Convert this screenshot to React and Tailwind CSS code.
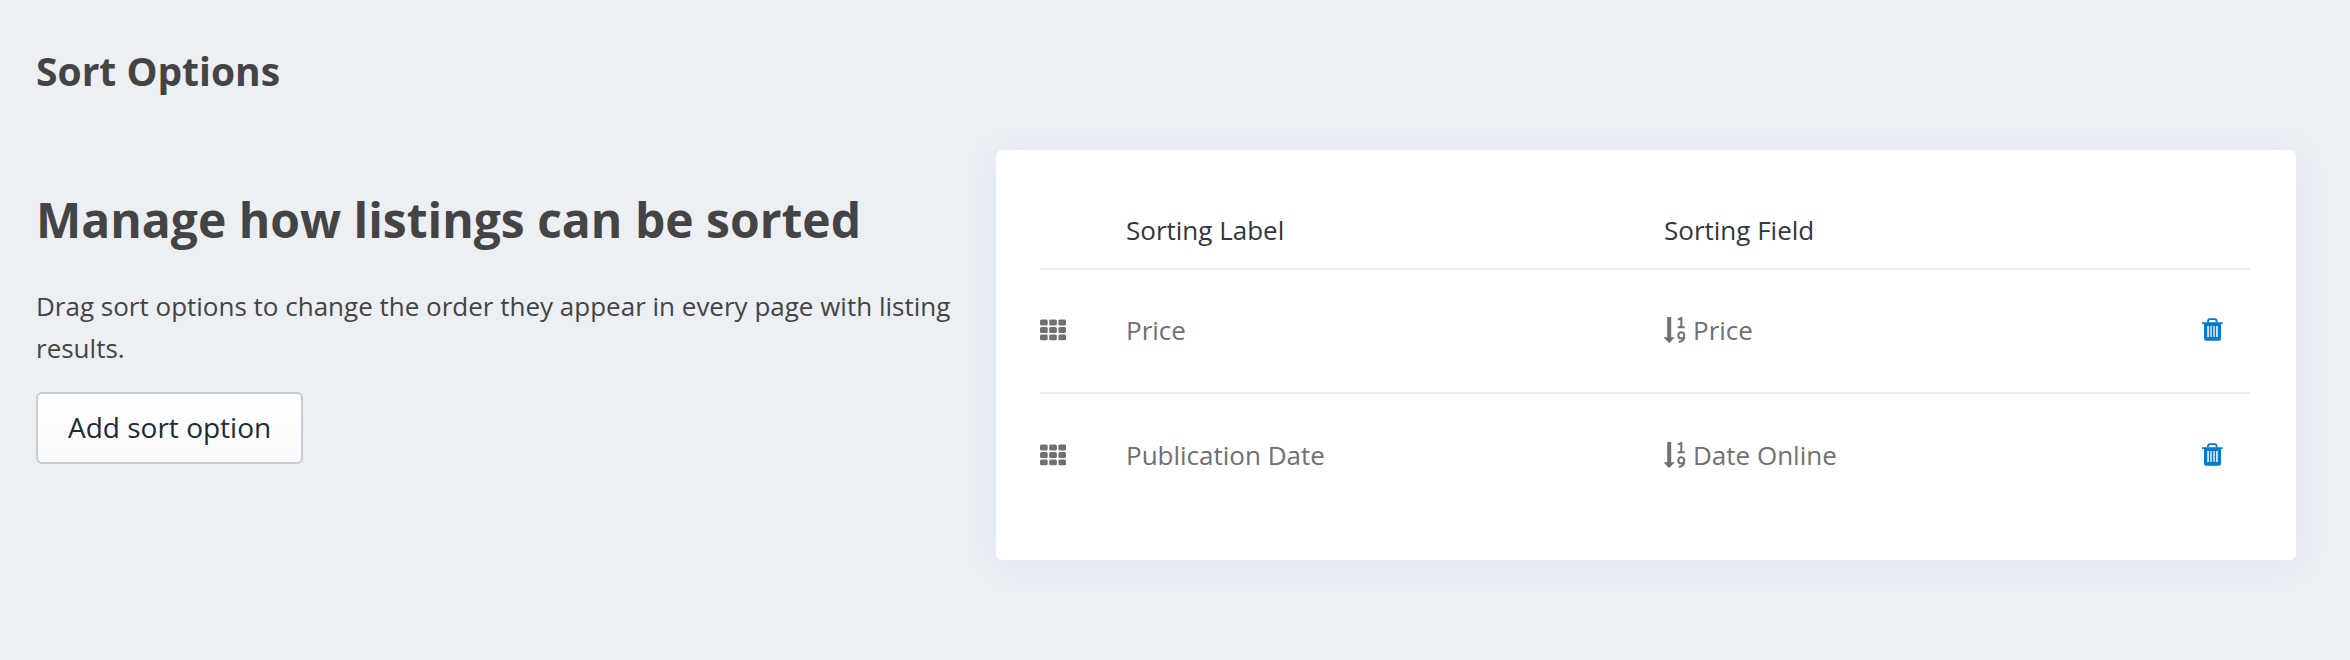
const rows = [
  { label: 'Price', field: 'Price' },
  { label: 'Publication Date', field: 'Date Online' },
];

function GridIcon() {
  const cells = [0, 1, 2].flatMap((r) => [0, 1, 2].map((c) => ({ r, c })));
  return (
    <svg width="26" height="22" viewBox="0 0 26 22" fill="currentColor" aria-hidden="true">
      {cells.map(({ r, c }) => (
        <rect key={`${r}-${c}`} x={c * 9.2} y={0.6 + r * 7.4} width="7.7" height="5.9" rx="1.5" />
      ))}
    </svg>
  );
}

function SortNumericIcon() {
  return (
    <svg width="22" height="28" viewBox="0 0 22 28" fill="none" stroke="currentColor" aria-hidden="true">
      <path d="M3.2 1h4v20.200h2.600c.6 0 .7.5.3.9l-4.300 4.400c-.4.4-.9.4-1.300 0L.2 22.100c-.4-.4-.3-.9.3-.9h2.700z" fill="currentColor" stroke="none" />
      <path d="M13.800 3.600 17.300 2V11M13.700 11.200h7" strokeWidth="2" />
      <path d="M20.300 19.400a3 3.200 0 1 0-6 0a3 3 0 0 0 6 0c0 4-1.800 6.700-5.600 6.300" strokeWidth="2" />
    </svg>
  );
}

function TrashIcon() {
  return (
    <svg width="22" height="24" viewBox="0 0 22 24" fill="none" stroke="currentColor" aria-hidden="true">
      <path d="M6 4.500V3.200q0-2 2-2h4.600q2 0 2 2v1.300" strokeWidth="1.800" />
      <path
        d="M0 4.200h20.600v1.900h-1.600v14.400q0 2.200-2.200 2.200H4.200q-2.200 0-2.200-2.200V6.100H0zM5.300 8v11h1.500V8zM8.400 8v11h1.300V8zM11.400 8v11h1.300V8zM14.200 8v11h1.500V8z"
        fill="currentColor"
        fillRule="evenodd"
        stroke="none"
      />
    </svg>
  );
}

export default function App() {
  return (
    <main className="min-h-screen bg-[#eceff4] pt-11 pr-[54px] pb-24 pl-9 font-['Open_Sans',sans-serif] text-[#444444]">
      <h1 className="text-[39px] leading-[54px] font-bold">Sort Options</h1>
      <div className="mt-[52px] grid grid-cols-[960fr_1300fr] items-start">
        <section className="pt-[37px] pr-8">
          <h2 className="text-[48px] leading-[66px] font-bold">Manage how listings can be sorted</h2>
          <p className="mt-8 text-[26px] leading-[42px]">
            Drag sort options to change the order they appear in every page with listing results.
          </p>
          <button
            type="button"
            className="mt-[23px] h-[72px] rounded-md border-2 border-[#c4cdd5] bg-linear-to-b from-white to-[#f9fafb] px-[30px] pb-0.5 text-[28px] leading-10 text-[#212b36]"
          >
            Add sort option
          </button>
        </section>
        <section className="rounded-md bg-white pt-11 pr-[46px] pb-[43px] pl-11 shadow-[0_4px_36px_rgba(60,80,200,0.06)]">
          <table className="w-full table-fixed border-collapse text-left text-[26px] leading-9 text-[#707070]">
            <colgroup>
              <col className="w-[86px]" />
              <col />
              <col />
              <col className="w-[48px]" />
            </colgroup>
            <thead>
              <tr className="h-[75px] border-b-2 border-[#e9ecef] text-[#32373f]">
                <th aria-label="Reorder" />
                <th className="pb-0.5 font-normal">Sorting Label</th>
                <th className="pb-0.5 font-normal">Sorting Field</th>
                <th aria-label="Actions" />
              </tr>
            </thead>
            <tbody>
              {rows.map((row) => (
                <tr key={row.label} className="h-[124px] border-b-2 border-[#e9ecef] last:border-b-0">
                  <td className="pb-0.5">
                    <button type="button" aria-label={`Move ${row.label}`} className="block cursor-grab">
                      <GridIcon />
                    </button>
                  </td>
                  <td className="pb-0.5">{row.label}</td>
                  <td className="pb-0.5">
                    <span className="flex items-center gap-[7px]">
                      <SortNumericIcon />
                      {row.field}
                    </span>
                  </td>
                  <td className="pb-0.5">
                    <button type="button" aria-label={`Delete ${row.label}`} className="block text-[#007ace]">
                      <TrashIcon />
                    </button>
                  </td>
                </tr>
              ))}
            </tbody>
          </table>
        </section>
      </div>
    </main>
  );
}
